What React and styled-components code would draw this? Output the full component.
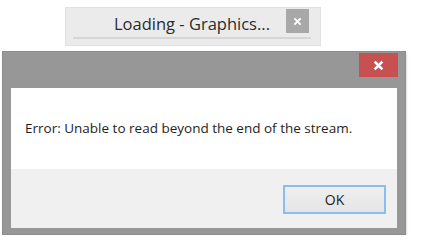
import styled, { createGlobalStyle } from 'styled-components'

const Global = createGlobalStyle`
    body {
        margin: 0;
        background: #ffffff;
        font-family: "Open Sans", "Noto Sans", sans-serif;
    }
`

const Page = styled.div`
    display: flex;
    flex-direction: column;
    align-items: flex-start;
    padding-top: 7px;
`

const Splash = styled.div`
    margin-left: 65px;
    width: 256px;
    height: 39px;
    box-sizing: border-box;
    background: #ebebeb;
    border: 1px solid #e2e2e2;
    display: flex;
    flex-direction: column;
    padding: 1px 9px 0 7px;
`

const SplashHead = styled.div`
    display: flex;
    align-items: center;
    height: 28px;
    border-bottom: 2px solid #d6d6d6;
`

const SplashTitle = styled.div`
    flex: 1;
    text-align: right;
    padding-right: 16px;
    font-size: 16.5px;
    color: #2b2b2b;
`

const GreyClose = styled.div`
    width: 23px;
    height: 24px;
    background: #a8a8a8;
    display: flex;
    align-items: center;
    justify-content: center;
    margin-right: 2px;
    align-self: flex-start;
`

const Dialog = styled.div`
    margin-top: 5px;
    margin-left: 2px;
    width: 404px;
    height: 184px;
    box-sizing: border-box;
    background: #979797;
    border: 1px solid #8c8c8c;
    box-shadow: 1px 2px 2px rgba(0, 0, 0, 0.12);
    padding: 0 8px 6px;
    display: flex;
    flex-direction: column;
`

const TitleBar = styled.div`
    height: 35px;
    display: flex;
    justify-content: flex-end;
    align-items: flex-start;
    padding-top: 1px;
`

const RedClose = styled.div`
    width: 39px;
    height: 24px;
    background: #c75050;
    display: flex;
    align-items: center;
    justify-content: center;
    margin-right: -1px;
`

const Body = styled.div`
    height: 81px;
    background: #ffffff;
    display: flex;
    align-items: center;
    padding-left: 14px;
    padding-bottom: 2px;
    box-sizing: border-box;
    font-size: 13.5px;
    color: #1e1e1e;
`

const Footer = styled.div`
    flex: 1;
    background: #f0f0f0;
    display: flex;
    justify-content: flex-end;
    align-items: flex-start;
    padding: 16px 11px 0 0;
`

const Button = styled.button`
    width: 103px;
    height: 29px;
    box-sizing: border-box;
    border: 2px solid #8cbdf0;
    background: linear-gradient(#efefef, #e5e5e5);
    font-family: inherit;
    font-size: 14px;
    color: #1e1e1e;
    padding: 0;
`

const Cross = ({ size, weight }) => (
    <svg width={size} height={size} viewBox="0 0 10 10">
        <path d="M1.5 1.5 L8.5 8.5 M8.5 1.5 L1.5 8.5" stroke="#ffffff" strokeWidth={weight} />
    </svg>
)

export default function App() {
    return <>
        <Global />
        <Page>
            <Splash>
                <SplashHead>
                    <SplashTitle>Loading - Graphics...</SplashTitle>
                    <GreyClose><Cross size={9} weight={2.2} /></GreyClose>
                </SplashHead>
            </Splash>
            <Dialog>
                <TitleBar>
                    <RedClose><Cross size={11} weight={2.4} /></RedClose>
                </TitleBar>
                <Body>Error: Unable to read beyond the end of the stream.</Body>
                <Footer>
                    <Button>OK</Button>
                </Footer>
            </Dialog>
        </Page>
    </>
}
